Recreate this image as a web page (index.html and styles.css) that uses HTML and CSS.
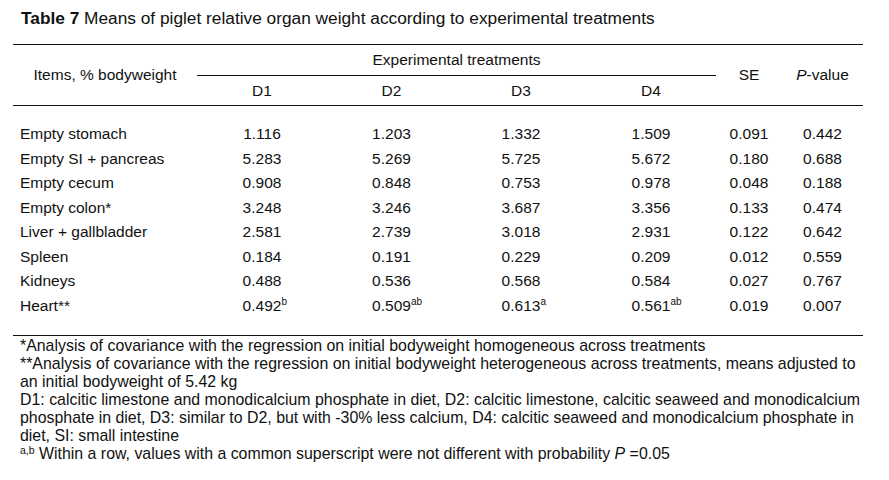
FILE: index.html
```html
<!DOCTYPE html>
<html lang="en">
<head>
<meta charset="utf-8">
<title>Table 7</title>
<link rel="stylesheet" href="styles.css">
</head>
<body>
<div class="page">
  <p class="caption"><b>Table 7</b> Means of piglet relative organ weight according to experimental treatments</p>
  <table class="data">
    <colgroup>
      <col class="c-item"><col class="c-d"><col class="c-d3"><col class="c-d"><col class="c-d"><col class="c-se"><col class="c-p">
    </colgroup>
    <thead>
      <tr>
        <th rowspan="2" class="h-span">Items, % bodyweight</th>
        <th colspan="4" class="h-group">Experimental treatments</th>
        <th rowspan="2" class="h-span">SE</th>
        <th rowspan="2" class="h-span"><i>P</i>-value</th>
      </tr>
      <tr>
        <th class="h-sub">D1</th>
        <th class="h-sub">D2</th>
        <th class="h-sub">D3</th>
        <th class="h-sub">D4</th>
      </tr>
    </thead>
    <tbody>
      <tr><td>Empty stomach</td><td>1.116</td><td>1.203</td><td>1.332</td><td>1.509</td><td>0.091</td><td>0.442</td></tr>
      <tr><td>Empty SI + pancreas</td><td>5.283</td><td>5.269</td><td>5.725</td><td>5.672</td><td>0.180</td><td>0.688</td></tr>
      <tr><td>Empty cecum</td><td>0.908</td><td>0.848</td><td>0.753</td><td>0.978</td><td>0.048</td><td>0.188</td></tr>
      <tr><td>Empty colon*</td><td>3.248</td><td>3.246</td><td>3.687</td><td>3.356</td><td>0.133</td><td>0.474</td></tr>
      <tr><td>Liver + gallbladder</td><td>2.581</td><td>2.739</td><td>3.018</td><td>2.931</td><td>0.122</td><td>0.642</td></tr>
      <tr><td>Spleen</td><td>0.184</td><td>0.191</td><td>0.229</td><td>0.209</td><td>0.012</td><td>0.559</td></tr>
      <tr><td>Kidneys</td><td>0.488</td><td>0.536</td><td>0.568</td><td>0.584</td><td>0.027</td><td>0.767</td></tr>
      <tr><td>Heart**</td><td>0.492<span class="sup">b</span></td><td>0.509<span class="sup">ab</span></td><td>0.613<span class="sup">a</span></td><td>0.561<span class="sup">ab</span></td><td>0.019</td><td>0.007</td></tr>
    </tbody>
  </table>
  <div class="notes">
    <p>*Analysis of covariance with the regression on initial bodyweight homogeneous across treatments</p>
    <p>**Analysis of covariance with the regression on initial bodyweight heterogeneous across treatments, means adjusted to<br>an initial bodyweight of 5.42 kg</p>
    <p>D1: calcitic limestone and monodicalcium phosphate in diet, D2: calcitic limestone, calcitic seaweed and monodicalcium<br>phosphate in diet, D3: similar to D2, but with -30% less calcium, D4: calcitic seaweed and monodicalcium phosphate in<br>diet, SI: small intestine</p>
    <p><span class="fsup">a,b</span> Within a row, values with a common superscript were not different with probability <i>P</i> =0.05</p>
  </div>
</div>
</body>
</html>
```
FILE: styles.css
```css
html, body {
  margin: 0;
  padding: 0;
  background: #ffffff;
}
body {
  font-family: "Liberation Sans", Arial, sans-serif;
  font-size: 15.5px;
  color: #111111;
}
.page {
  width: 889px;
  padding: 8px 0 0 13px;
  box-sizing: border-box;
}
.caption {
  margin: 0 0 16px 8px;
  font-size: 17.3px;
  line-height: 20px;
  white-space: nowrap;
}
.caption b {
  font-weight: bold;
}
.data {
  table-layout: fixed;
  width: 850px;
  border-collapse: separate;
  border-spacing: 0;
}
.c-item { width: 184px; }
.c-d { width: 130px; }
.c-d3 { width: 129px; }
.c-se { width: 66px; }
.c-p { width: 81px; }
.data th {
  font-weight: normal;
  padding: 0;
  text-align: center;
  vertical-align: middle;
  line-height: 18px;
}
.h-span {
  border-top: 1px solid #111;
  border-bottom: 1px solid #111;
}
.h-group {
  height: 30px;
  border-top: 1px solid #111;
  border-bottom: 1px solid #111;
}
.h-sub {
  height: 29px;
  border-bottom: 1px solid #111;
}
.data td {
  padding: 0;
  height: 24.5px;
  line-height: 24.5px;
  text-align: center;
  white-space: nowrap;
}
.data td:first-child {
  text-align: left;
  padding-left: 7px;
}
.data tbody tr:first-child td {
  padding-top: 16px;
}
.data tbody tr:last-child td {
  padding-bottom: 17px;
  border-bottom: 1px solid #111;
}
.sup {
  display: inline-block;
  width: 0;
  overflow: visible;
  font-size: 10px;
  line-height: 10px;
  vertical-align: 6px;
}
.notes {
  padding: 1px 0 0 7px;
  font-size: 15.9px;
}
.notes p {
  margin: 0;
  line-height: 18px;
  white-space: nowrap;
}
.fsup {
  font-size: 10.5px;
  vertical-align: 5px;
  line-height: 10px;
}
```
